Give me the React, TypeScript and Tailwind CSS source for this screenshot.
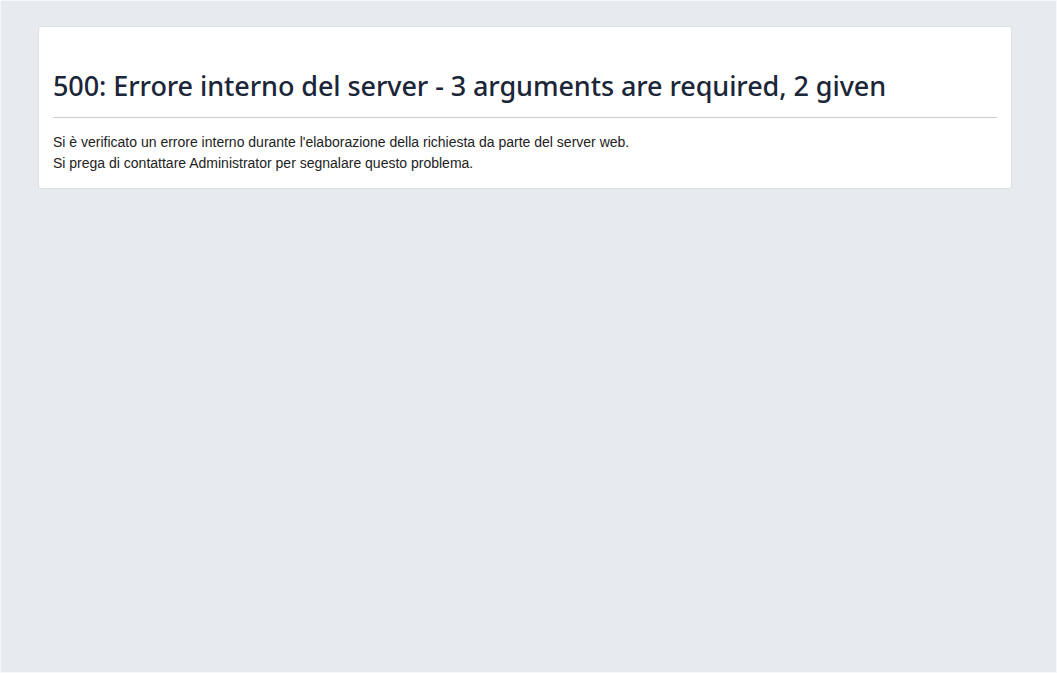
export default function App() {
  return (
    <div className="min-h-[673px] h-[673px] bg-[#e7ebef] border border-[#f7f8f9] pl-[37px] pr-[44px] pt-[25px]">
      <div className="bg-white border border-[#dcdfe2] rounded-[3px] px-[14px] pt-[42px] pb-[14px]">
        <h1
          className="text-[27px] leading-[34px] font-medium tracking-[-0.08px] text-[#1b2638]"
          style={{ fontFamily: '"Noto Sans", "Open Sans", sans-serif' }}
        >
          500: Errore interno del server - 3 arguments are required, 2 given
        </h1>
        <hr className="mt-[14px] mb-[14px] border-0 border-t border-[#cccccc]" />
        <div
          className="text-[14px] leading-[21px] text-[#222222]"
          style={{ fontFamily: '"Liberation Sans", Arial, sans-serif' }}
        >
          <p>Si è verificato un errore interno durante l'elaborazione della richiesta da parte del server web.</p>
          <p>Si prega di contattare Administrator per segnalare questo problema.</p>
        </div>
      </div>
    </div>
  );
}
